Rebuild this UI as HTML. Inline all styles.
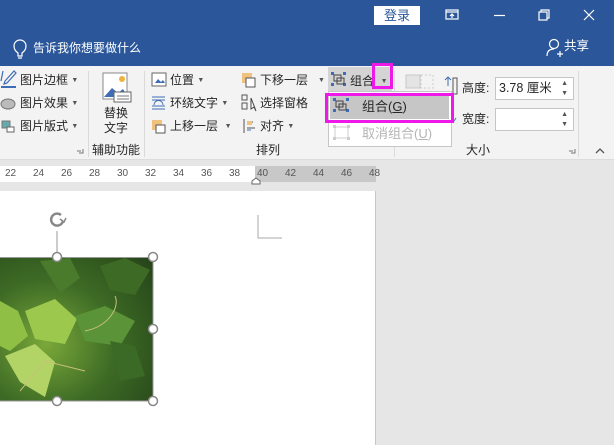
<!DOCTYPE html><html><head><meta charset="utf-8"><style>
*{margin:0;padding:0;box-sizing:border-box}
body{width:614px;height:445px;overflow:hidden;position:relative;background:#e6e6e6;font-family:"Liberation Sans","Noto Sans CJK SC",sans-serif;font-size:12px;color:#262626}
.a{position:absolute;white-space:nowrap}
.t{font-size:12px;line-height:16px}
.sep{position:absolute;width:1px;background:#dadada}
.dd{font-size:7px;color:#555;vertical-align:2px}
</style></head><body>
<div class="a" style="left:0;top:0;width:614px;height:66px;background:#2b579a"></div>
<div class="a" style="left:374px;top:6px;width:46px;height:19px;background:#fff;color:#2b579a;font-size:13px;text-align:center;line-height:19px">登录</div>
<svg class="a" style="left:0;top:0" width="614" height="66">
<g stroke="#fff" fill="none" stroke-width="1.2">
<rect x="446" y="10" width="12" height="9"/><line x1="446" y1="12" x2="458" y2="12"/><path d="M452 18v-4M450 16l2-2 2 2"/>
<line x1="494" y1="15.5" x2="505" y2="15.5"/>
<rect x="539" y="12" width="8" height="8"/><path d="M541 12v-2h8v8h-2"/>
<path d="M584 10l10 10M594 10l-10 10"/>
<path d="M18 53c-3-2-4-4-4-7a6 6 0 0 1 12 0c0 3-1 5-4 7v3h-4z"/><line x1="18" y1="58" x2="22" y2="58"/>
<circle cx="554" cy="44" r="4.5"/><path d="M547 56c0-5 3-7 7-7"/><path d="M557 54h6M560 51v6"/>
</g></svg>
<div class="a" style="left:33px;top:40px;color:#fff;font-size:12px;line-height:17px">告诉我你想要做什么</div>
<div class="a" style="left:564px;top:38px;color:#fff;font-size:12.5px;line-height:17px">共享</div>

<div class="a" style="left:0;top:66px;width:614px;height:94px;background:#f3f3f3;border-bottom:1px solid #dcdcdc"></div>
<div class="sep" style="left:88px;top:71px;height:86px"></div>
<div class="sep" style="left:144px;top:71px;height:86px"></div>
<div class="sep" style="left:394px;top:71px;height:86px"></div>
<div class="sep" style="left:578px;top:71px;height:86px"></div>

<svg class="a" style="left:0;top:66px" width="614" height="94">
<path d="M3 5l-2 10M14 5l-9 10l-1 3 3-1 9-10z" stroke="#3e6db5" fill="none" stroke-width="1.2"/><rect x="1" y="20" width="15" height="2" fill="#3e6db5"/>
<ellipse cx="8" cy="38" rx="7" ry="5" fill="#bbb" stroke="#777"/>
<rect x="2" y="55" width="8" height="7" fill="#6aa" stroke="#777"/><rect x="7" y="61" width="7" height="5" fill="#fff" stroke="#666"/>
<rect x="103" y="7" width="24" height="26" fill="#fff" stroke="#888"/><path d="M104 31l8-9 6 5 5-4 5 8z" fill="#3e6db5"/><circle cx="122" cy="13" r="3" fill="#f0b23c"/><rect x="114" y="26" width="17" height="10" fill="#fff" stroke="#666"/><path d="M117 30h12M117 33h12" stroke="#777"/>
<rect x="152" y="7" width="14" height="13" fill="#fff" stroke="#666"/><path d="M155 17l3-4 3 3 2-2 2 3z" fill="#3e6db5"/>
<path d="M152 31h13M152 34h13M152 40h13M152 43h13" stroke="#3e6db5"/><path d="M154 39a4 4 0 0 1 9 0" stroke="#3e6db5" fill="none"/>
<rect x="152" y="54" width="10" height="10" fill="#efc27d"/><rect x="156" y="59" width="9" height="8" fill="#fff" stroke="#555"/>
<rect x="242" y="7" width="10" height="10" fill="#efc27d"/><rect x="246" y="12" width="9" height="9" fill="#fff" stroke="#555"/>
<rect x="242" y="29" width="5" height="5" fill="none" stroke="#555"/><rect x="242" y="37" width="5" height="6" fill="none" stroke="#555"/><path d="M251 32l0 11 3-2 2 4z" fill="#fff" stroke="#444"/>
<path d="M244 53v14M247 56h6M247 62h8" stroke="#555"/><rect x="247" y="55" width="5" height="4" fill="#efc27d"/><path d="M247 64h4" stroke="#3e6db5"/>
<rect x="328" y="1" width="64" height="25" fill="#d4d4d4"/>
<g fill="#3e6db5"><rect x="331" y="6" width="3" height="3"/><rect x="343" y="6" width="3" height="3"/><rect x="331" y="17" width="3" height="3"/><rect x="343" y="17" width="3" height="3"/></g>
<rect x="334" y="9" width="7" height="6" fill="none" stroke="#444"/><rect x="337" y="12" width="7" height="6" fill="none" stroke="#444"/>
<rect x="406" y="9" width="14" height="13" fill="#e4e4e4" stroke="#c8c8c8"/><rect x="421" y="9" width="12" height="13" fill="none" stroke="#ccc" stroke-dasharray="2 2"/>
<path d="M448 20v-8M445 14l3-3 3 3" stroke="#3e6db5" fill="none"/><rect x="453" y="12" width="4" height="16" fill="none" stroke="#555"/>
<path d="M450 48v6h4M452 52l2 3 2-3" stroke="#3e6db5" fill="none"/>
<path d="M79 87h4v-4M77 85h4" stroke="#777" fill="none"/>
<path d="M571 87h4v-4M569 85h4" stroke="#777" fill="none"/>
<path d="M596 87l4-4 4 4" stroke="#555" fill="none" stroke-width="1.3"/>
</svg>
<div class="a t" style="left:20px;top:72px">图片边框 <span class="dd">▼</span></div>
<div class="a t" style="left:20px;top:95px">图片效果 <span class="dd">▼</span></div>
<div class="a t" style="left:20px;top:118px">图片版式 <span class="dd">▼</span></div>
<div class="a t" style="left:104px;top:106px;line-height:15px;text-align:center">替换<br>文字</div>
<div class="a t" style="left:92px;top:142px">辅助功能</div>
<div class="a t" style="left:170px;top:72px">位置 <span class="dd">▼</span></div>
<div class="a t" style="left:170px;top:95px">环绕文字 <span class="dd">▼</span></div>
<div class="a t" style="left:170px;top:118px">上移一层 &nbsp;<span class="dd">▼</span></div>
<div class="a t" style="left:260px;top:72px">下移一层 &nbsp;&nbsp;<span class="dd">▼</span></div>
<div class="a t" style="left:260px;top:95px">选择窗格</div>
<div class="a t" style="left:260px;top:118px">对齐 <span class="dd">▼</span></div>
<div class="a t" style="left:256px;top:142px">排列</div>
<div class="a t" style="left:350px;top:73px">组合 &nbsp;<span class="dd">▼</span></div>
<div class="a" style="left:372px;top:63px;width:21px;height:26px;border:3px solid #ee19e9"></div>
<div class="a t" style="left:462px;top:80px">高度:</div>
<div class="a t" style="left:462px;top:111px">宽度:</div>
<div class="a" style="left:495px;top:77px;width:79px;height:23px;background:#fff;border:1px solid #c6c6c6;font-size:12.5px;line-height:21px;padding-left:3px">3.78 厘米<span class="dd" style="position:absolute;right:5px;top:1px;font-size:7px;line-height:10px">▲<br>▼</span></div>
<div class="a" style="left:495px;top:108px;width:79px;height:23px;background:#fff;border:1px solid #c6c6c6"><span class="dd" style="position:absolute;right:5px;top:1px;font-size:7px;line-height:10px">▲<br>▼</span></div>
<div class="a t" style="left:466px;top:142px">大小</div>

<div class="a" style="left:328px;top:91px;width:124px;height:56px;background:#fff;border:1px solid #c6c6c6"></div>
<div class="a" style="left:330px;top:96px;width:119px;height:23px;background:#c6c6c6"></div>
<div class="a" style="left:325px;top:93px;width:129px;height:30px;border:3px solid #ee19e9"></div>
<svg class="a" style="left:328px;top:91px" width="124" height="56">
<g fill="#3e6db5"><rect x="5" y="7" width="3" height="3"/><rect x="18" y="7" width="3" height="3"/><rect x="5" y="18" width="3" height="3"/><rect x="18" y="18" width="3" height="3"/></g>
<rect x="8" y="10" width="7" height="6" fill="none" stroke="#444"/><rect x="11" y="13" width="7" height="6" fill="none" stroke="#444"/>
<g fill="#ccc"><rect x="5" y="34" width="3" height="3"/><rect x="19" y="34" width="3" height="3"/><rect x="5" y="46" width="3" height="3"/><rect x="19" y="46" width="3" height="3"/></g>
<rect x="7" y="36" width="13" height="11" fill="none" stroke="#ccc"/>
</svg>
<div class="a t" style="left:362px;top:99px;font-size:13px">组合(<u>G</u>)</div>
<div class="a t" style="left:362px;top:126px;color:#b4b4b4;font-size:13px">取消组合(<u>U</u>)</div>

<div class="a" style="left:0;top:166px;width:255px;height:16px;background:#fff"></div>
<div class="a" style="left:255px;top:166px;width:121px;height:16px;background:#c8c8c8"></div>
<div class="a" style="left:0;top:166px;font-size:10px;line-height:16px;color:#555;width:400px">
<span class="a" style="left:5px">22</span><span class="a" style="left:33px">24</span><span class="a" style="left:61px">26</span><span class="a" style="left:89px">28</span><span class="a" style="left:117px">30</span><span class="a" style="left:145px">32</span><span class="a" style="left:173px">34</span><span class="a" style="left:201px">36</span><span class="a" style="left:229px">38</span><span class="a" style="left:257px">40</span><span class="a" style="left:285px">42</span><span class="a" style="left:313px">44</span><span class="a" style="left:341px">46</span><span class="a" style="left:369px">48</span></div>
<svg class="a" style="left:251px;top:177px" width="10" height="8"><path d="M1 7V4l4-3 4 3v3z" fill="#fff" stroke="#666"/></svg>

<div class="a" style="left:0;top:191px;width:376px;height:254px;background:#fff;border-right:1px solid #c6c6c6"></div>
<svg class="a" style="left:0;top:191px" width="376" height="254">
<path d="M258 24v23h24" stroke="#aaa" fill="none"/>
<defs><radialGradient id="g" cx="0.3" cy="0.6" r="0.9"><stop offset="0" stop-color="#7aa83a"/><stop offset="0.5" stop-color="#3d6b25"/><stop offset="1" stop-color="#26441a"/></radialGradient></defs>
<rect x="0" y="67" width="153" height="143" fill="url(#g)"/>
<path d="M0 110l18 10 10 25-18 15-10-5z" fill="#8fbf45"/><path d="M25 120l30-12 22 20-12 25-30-5z" fill="#9cc84e"/><path d="M5 165l30-12 20 18-10 35-25-15z" fill="#b2d466"/><path d="M75 125l30-10 30 15-15 25-35-5z" fill="#5a9338"/><path d="M100 75l25-8 25 12-15 25-25-5z" fill="#3d6a25"/><path d="M40 70l30-3 10 20-20 15z" fill="#4a7a2b"/><path d="M110 150l25 5 10 30-25 5z" fill="#3b6a26"/>
<path d="M20 200l25-30 40 10" stroke="#c9c07a" fill="none"/><path d="M115 105c5 10 -5 30 -30 35" stroke="#c9c07a" fill="none"/>
<line x1="0" y1="66.5" x2="153" y2="66.5" stroke="#999"/><line x1="153" y1="66" x2="153" y2="210" stroke="#999"/><line x1="0" y1="210" x2="153" y2="210" stroke="#999"/>
<line x1="57" y1="40" x2="57" y2="66" stroke="#999"/>
<path d="M61 24a6 6 0 1 0 2 6" stroke="#888" fill="none" stroke-width="2.5"/><path d="M60 28l4 3 2-4" stroke="#888" fill="none" stroke-width="1.5"/>
<g fill="#fff" stroke="#888" stroke-width="1.5"><circle cx="57" cy="66" r="4.5"/><circle cx="153" cy="66" r="4.5"/><circle cx="153" cy="138" r="4.5"/><circle cx="153" cy="210" r="4.5"/><circle cx="57" cy="210" r="4.5"/></g>
</svg>
</body></html>
